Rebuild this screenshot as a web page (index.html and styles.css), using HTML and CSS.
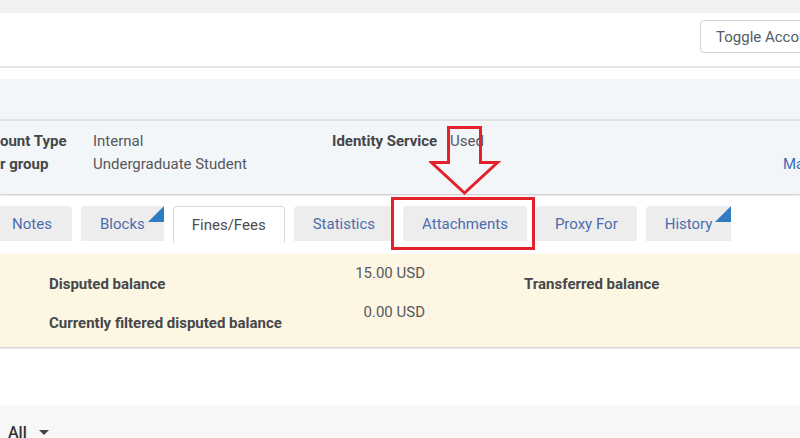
FILE: index.html
```html
<!DOCTYPE html>
<html>
<head>
<meta charset="utf-8">
<link rel="stylesheet" href="styles.css">
</head>
<body>
<div class="page">
  <div class="topbar"></div>
  <div class="header">
    <button class="toggle">Toggle Account</button>
  </div>
  <div class="sep"></div>
  <div class="band"></div>
  <div class="info">
    <div class="info-row">
      <span class="lbl lbl1">ount Type</span><span class="val val1">Internal</span>
      <span class="lbl lbl2">Identity Service</span><span class="val">Used</span>
    </div>
    <div class="info-row">
      <span class="lbl lbl1">r group</span><span class="val val1">Undergraduate Student</span>
      <span class="more">Ma</span>
    </div>
  </div>
  <div class="tabs">
    <div class="tab">Notes</div>
    <div class="tab flag">Blocks<span class="corner"></span></div>
    <div class="tab active">Fines/Fees</div>
    <div class="tab">Statistics</div>
    <div class="tab">Attachments</div>
    <div class="tab">Proxy For</div>
    <div class="tab flag">History<span class="corner"></span></div>
  </div>
  <div class="summary">
    <div class="sum-row">
      <span class="s-lbl">Disputed balance</span>
      <span class="s-val">15.00 USD</span>
      <span class="s-lbl s-lbl2">Transferred balance</span>
    </div>
    <div class="sum-row">
      <span class="s-lbl">Currently filtered disputed balance</span>
      <span class="s-val">0.00 USD</span>
    </div>
  </div>
  <div class="spacer"></div>
  <div class="footer">
    <span class="all">All</span><span class="caret"></span>
  </div>

  <div class="red-box"></div>
  <svg class="arrow" width="80" height="80" viewBox="0 0 80 80">
    <polygon points="19.5,1.5 51.5,1.5 51.5,36.5 68.5,36.5 35.5,67 2.5,36.5 19.5,36.5" fill="none" stroke="#e3212b" stroke-width="3"/>
  </svg>
</div>
</body>
</html>
```
FILE: styles.css
```css
html, body {
  margin: 0;
  padding: 0;
}
body {
  width: 800px;
  height: 438px;
  overflow: hidden;
  font-family: Roboto, "Liberation Sans", Arial, sans-serif;
  background: #ffffff;
}
.page {
  position: relative;
  width: 800px;
  height: 438px;
  overflow: hidden;
}
.topbar {
  height: 13px;
  background: #f2f2f2;
}
.header {
  height: 53px;
  background: #ffffff;
  display: flex;
  align-items: flex-start;
  padding-left: 700px;
  box-sizing: border-box;
  padding-top: 7px;
}
.toggle {
  flex: none;
  height: 33px;
  padding: 0 15px;
  border: 1px solid #d2d2d2;
  border-radius: 4px;
  background: #ffffff;
  font-family: Roboto, "Liberation Sans", sans-serif;
  font-size: 15px;
  color: #555b66;
  white-space: nowrap;
}
.sep {
  height: 2px;
  background: #e6e6e6;
  margin-bottom: 11px;
}
.band {
  height: 40px;
  background: #f3f6f8;
  border-bottom: 2px solid #e4e4e4;
}
.info {
  height: 73px;
  background: #f3f6f8;
  box-shadow: 0 1px 2px rgba(0,0,0,0.25);
  box-sizing: border-box;
  padding-top: 8px;
  position: relative;
}
.info-row {
  display: flex;
  align-items: center;
  height: 23px;
  font-size: 15px;
}
.lbl {
  font-weight: 700;
  color: #444649;
}
.lbl1 {
  width: 93px;
}
.val {
  color: #55585c;
}
.val1 {
  width: 239px;
}
.lbl2 {
  width: 118px;
}
.more {
  margin-left: auto;
  margin-right: -8px;
  color: #3a6db5;
  width: 25px;
}
.tabs {
  display: flex;
  gap: 9px;
  margin-top: 12px;
  margin-left: -8px;
  height: 37px;
  align-items: flex-start;
}
.tab {
  position: relative;
  height: 35px;
  padding: 0 19px;
  display: flex;
  align-items: center;
  background: #ededed;
  border-radius: 4px 4px 0 0;
  color: #4d6cae;
  font-size: 15px;
  white-space: nowrap;
  box-sizing: border-box;
}
.tab:first-child {
  width: 80px;
  justify-content: center;
}
.tab.active {
  height: 37px;
  background: #ffffff;
  border: 1px solid #d9d9d9;
  border-bottom: none;
  color: #4a4d52;
  padding: 0 18px;
}
.corner {
  position: absolute;
  top: 0;
  right: 0;
  width: 0;
  height: 0;
  border-style: solid;
  border-width: 0 0 16px 16px;
  border-color: transparent transparent #2f7cc0 transparent;
}
.summary {
  margin-top: 11px;
  height: 93px;
  background: #fdf6e3;
  box-shadow: 0 1px 2px rgba(0,0,0,0.25);
  box-sizing: border-box;
  padding-top: 10px;
}
.sum-row {
  display: flex;
  align-items: flex-start;
  height: 39px;
  font-size: 15px;
}
.s-lbl {
  font-weight: 700;
  color: #46484b;
  margin-left: 49px;
  width: 300px;
  padding-top: 11px;
}
.s-val {
  color: #55585c;
  width: 76px;
  text-align: right;
}
.s-lbl2 {
  margin-left: 99px;
  width: auto;
}
.spacer {
  height: 58px;
}
.footer {
  height: 33px;
  background: #f7f7f7;
  display: flex;
  align-items: flex-end;
  padding-left: 8px;
}
.all {
  font-size: 16px;
  font-weight: 500;
  color: #333;
  line-height: 18px;
  margin-bottom: -4px;
}
.caret {
  width: 0;
  height: 0;
  border-style: solid;
  border-width: 5px 5px 0 5px;
  border-color: #444 transparent transparent transparent;
  margin-left: 12px;
  margin-bottom: 3px;
}
.red-box {
  position: absolute;
  left: 391px;
  top: 197px;
  width: 144px;
  height: 53px;
  box-sizing: border-box;
  border: 3px solid #e3212b;
}
.arrow {
  position: absolute;
  left: 429px;
  top: 126px;
}
```
